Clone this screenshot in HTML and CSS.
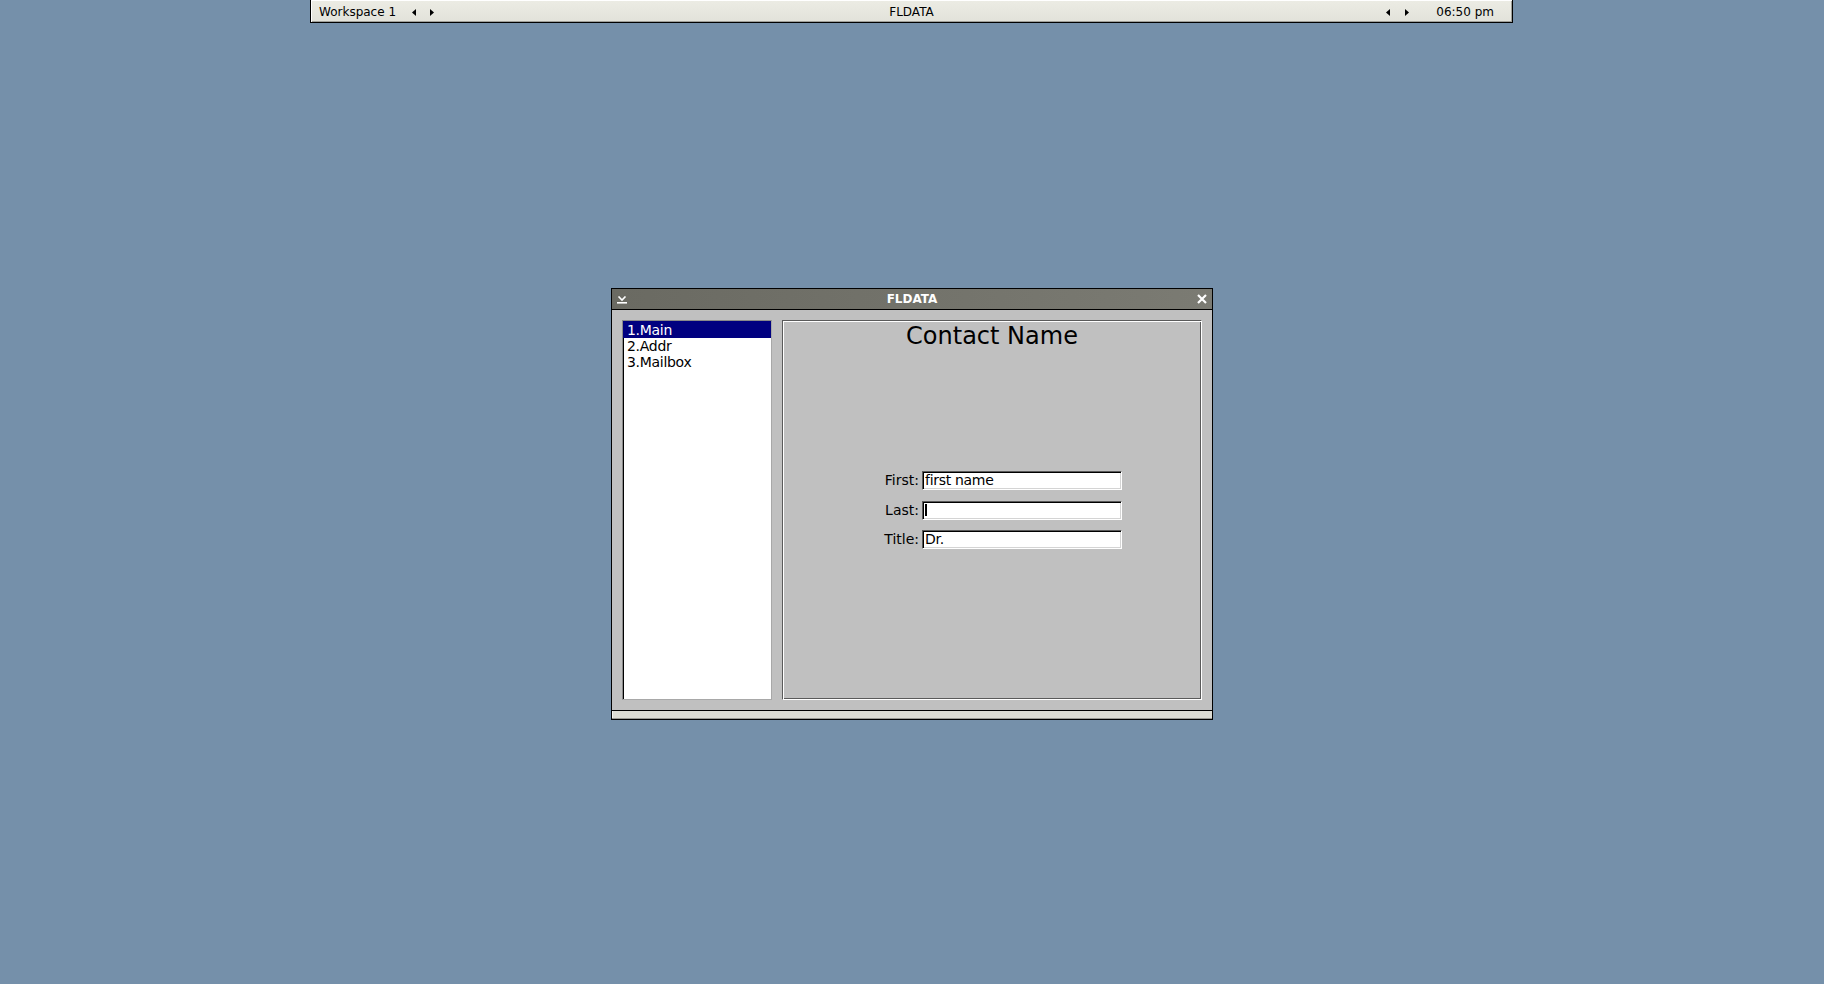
FILE: index.html
```html
<!DOCTYPE html>
<html>
<head>
<meta charset="utf-8">
<title>FLDATA</title>
<link rel="stylesheet" href="styles.css">
</head>
<body>
<div class="taskbar">
  <div class="tb-left">
    <span class="ws">Workspace 1</span>
    <svg class="tri" width="4" height="7" viewBox="0 0 4 7"><polygon points="4,0 4,7 0,3.5" fill="#000"/></svg>
    <svg class="tri" width="4" height="7" viewBox="0 0 4 7"><polygon points="0,0 0,7 4,3.5" fill="#000"/></svg>
  </div>
  <div class="tb-title">FLDATA</div>
  <div class="tb-right">
    <svg class="tri" width="4" height="7" viewBox="0 0 4 7"><polygon points="4,0 4,7 0,3.5" fill="#000"/></svg>
    <svg class="tri" width="4" height="7" viewBox="0 0 4 7"><polygon points="0,0 0,7 4,3.5" fill="#000"/></svg>
    <span class="clock">06:50 pm</span>
  </div>
</div>

<div class="window">
  <div class="titlebar">
    <svg class="btn-min" width="10" height="8" viewBox="0 0 10 8"><polyline points="1.5,0.5 5,4 8.5,0.5" fill="none" stroke="#fff" stroke-width="1.6"/><rect x="0" y="6" width="10" height="1.6" fill="#fff"/></svg>
    <span class="wtitle">FLDATA</span>
    <svg class="btn-close" width="10" height="10" viewBox="0 0 10 10"><path d="M1 1 L9 9 M9 1 L1 9" stroke="#fff" stroke-width="2.2" fill="none"/></svg>
  </div>
  <div class="client">
    <div class="list">
      <div class="item selected">1.Main</div>
      <div class="item">2.Addr</div>
      <div class="item">3.Mailbox</div>
    </div>
    <div class="panel">
      <div class="heading">Contact Name</div>
      <div class="form">
        <label class="lbl">First:</label>
        <div class="field">first name</div>
        <label class="lbl">Last:</label>
        <div class="field"><span class="cursor"></span></div>
        <label class="lbl">Title:</label>
        <div class="field">Dr.</div>
      </div>
    </div>
  </div>
  <div class="grip"></div>
</div>
</body>
</html>
```
FILE: styles.css
```css
html, body {
  margin: 0;
  padding: 0;
}
body {
  width: 1824px;
  height: 984px;
  background: #7590aa;
  font-family: "DejaVu Sans", "Liberation Sans", sans-serif;
  position: relative;
  overflow: hidden;
}

/* ---------- taskbar ---------- */
.taskbar {
  box-sizing: border-box;
  margin-left: 310px;
  width: 1203px;
  height: 23px;
  padding-top: 2px;
  background: linear-gradient(#ececE4, #e2e2da);
  border-left: 1px solid #000;
  border-right: 1px solid #000;
  border-bottom: 1px solid #000;
  box-shadow: inset 1px 1px 0 #ffffff, inset -1px -1px 0 #a0a09a;
  display: grid;
  grid-template-columns: 1fr auto 1fr;
  align-items: center;
  font-size: 12px;
  color: #000;
  line-height: 20px;
}
.tb-left {
  display: flex;
  align-items: center;
  padding-left: 8px;
}
.ws {
  margin-right: 16px;
}
.tb-left .tri + .tri {
  margin-left: 14px;
}
.tb-title {
  text-align: center;
}
.tb-right {
  display: flex;
  align-items: center;
  justify-content: flex-end;
  padding-right: 18px;
}
.tb-right .tri + .tri {
  margin-left: 15px;
}
.clock {
  margin-left: 27px;
}
.tri {
  display: block;
}

/* ---------- window ---------- */
.window {
  position: absolute;
  left: 611px;
  top: 288px;
  width: 602px;
  box-sizing: border-box;
  border: 1px solid #000;
  display: flex;
  flex-direction: column;
  background: #c0c0c0;
}
.titlebar {
  height: 20px;
  border-bottom: 1px solid #000;
  background: linear-gradient(to right, #6a6a62, #7b7b73);
  display: flex;
  align-items: center;
  justify-content: space-between;
  padding: 0 5px 0 5px;
}
.btn-min {
  display: block;
  margin-top: 1px;
}
.btn-close {
  display: block;
}
.wtitle {
  color: #fff;
  font-weight: bold;
  font-size: 12px;
  line-height: 20px;
}
.client {
  height: 400px;
  box-sizing: border-box;
  padding: 10px;
  display: flex;
  gap: 10px;
  background: #c0c0c0;
}
.grip {
  height: 7px;
  border-top: 1px solid #000;
  border-bottom: 1px solid #9a9a94;
  background: #dcdcd4;
  box-shadow: inset 1px 0 0 #f4f4ee;
}

/* list */
.list {
  width: 150px;
  height: 380px;
  box-sizing: border-box;
  background: #fff;
  border-top: 1px solid #8a8a8a;
  border-left: 1px solid #8a8a8a;
  border-right: 1px solid #a8a8a8;
  border-bottom: 1px solid #a8a8a8;
  box-shadow: inset 1px 1px 0 #000;
  font-size: 14px;
  letter-spacing: -0.3px;
}
.item {
  height: 16px;
  line-height: 16px;
  padding-left: 4px;
  color: #000;
  white-space: nowrap;
}
.item.selected {
  background: #000080;
  color: #fff;
  height: 17px;
  line-height: 18px;
}

/* panel */
.panel {
  flex: 1;
  height: 380px;
  box-sizing: border-box;
  border-top: 1px solid #5a5a5a;
  border-left: 1px solid #5a5a5a;
  border-right: 1px solid #fff;
  border-bottom: 1px solid #fff;
  box-shadow: inset 1px 1px 0 #fff, inset -1px -1px 0 #5a5a5a;
  display: grid;
  grid-template: 1fr / 1fr;
}
.heading {
  grid-area: 1 / 1;
  align-self: start;
  justify-self: center;
  font-size: 24px;
  line-height: 28px;
  margin-top: 1px;
  color: #000;
}
.form {
  grid-area: 1 / 1;
  align-self: center;
  justify-self: start;
  display: grid;
  grid-template-columns: 136px 200px;
  column-gap: 3px;
  row-gap: 10.5px;
  align-items: center;
  font-size: 14px;
}
.lbl {
  text-align: right;
  color: #000;
  line-height: 19px;
}
.field {
  box-sizing: border-box;
  height: 19px;
  background: #fff;
  border-top: 1px solid #5a5a5a;
  border-left: 1px solid #5a5a5a;
  border-right: 1px solid #fff;
  border-bottom: 1px solid #fff;
  box-shadow: inset 1px 1px 0 #000, inset -1px -1px 0 #d4d4d4;
  padding: 0 0 0 2px;
  line-height: 17px;
  color: #000;
  letter-spacing: -0.3px;
  white-space: nowrap;
  display: flex;
  align-items: center;
}
.cursor {
  display: block;
  width: 2px;
  height: 12px;
  background: #000;
}
```
